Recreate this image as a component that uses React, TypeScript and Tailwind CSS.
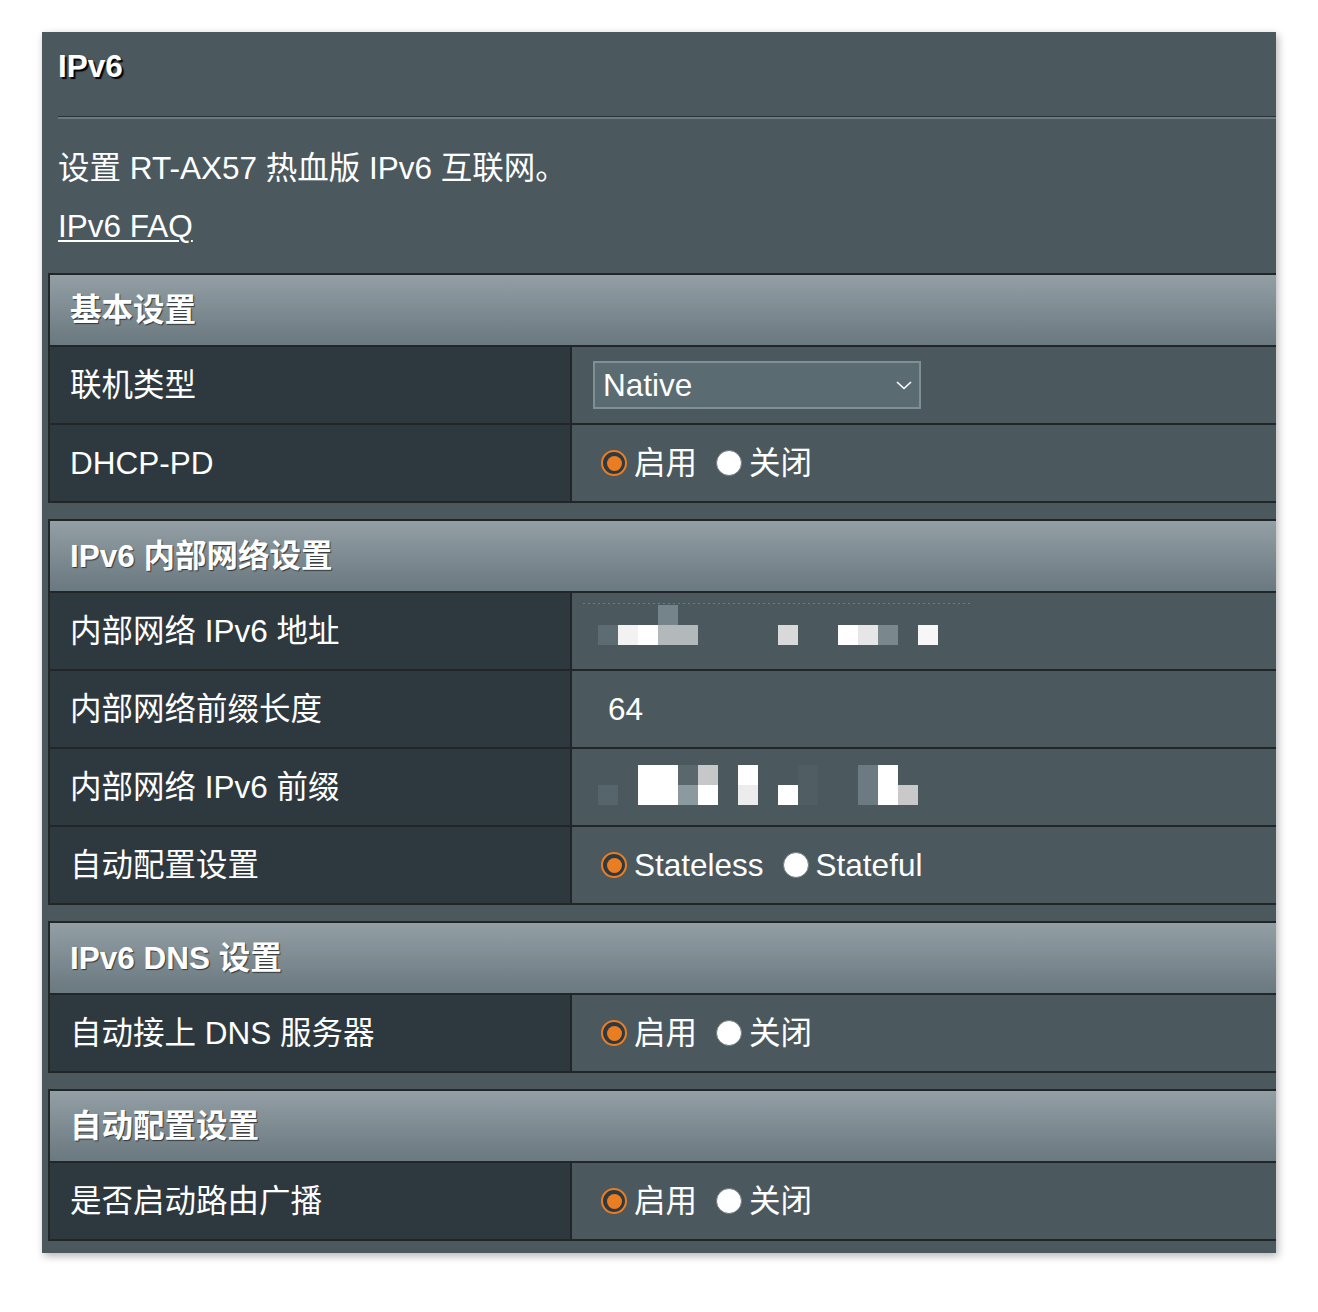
import React from "react";

function Radio({ checked }: { checked: boolean }) {
  return checked ? (
    <span className="w-[26px] h-[26px] rounded-full border-[2.5px] border-[#ea7d22] bg-[#2e3940] flex items-center justify-center shrink-0">
      <span className="w-[15px] h-[15px] rounded-full bg-[#ea7d22]" />
    </span>
  ) : (
    <span className="w-[26px] h-[26px] rounded-full border-[1.5px] border-[#6f7d83] bg-white shrink-0" />
  );
}

function RadioGroup({ options }: { options: string[] }) {
  return (
    <div className="flex items-center">
      {options.map((o, i) => (
        <div key={o} className={"flex items-center " + (i > 0 ? "ml-[19px]" : "")}>
          <Radio checked={i === 0} />
          <span className="ml-[7px]">{o}</span>
        </div>
      ))}
    </div>
  );
}

function Header({ children }: { children: React.ReactNode }) {
  return (
    <div className="h-[70px] bg-gradient-to-b from-[#939fa5] to-[#6a787f] flex items-center pl-[20px] font-bold [text-shadow:1px_1px_1px_rgba(0,0,0,0.6)]">
      {children}
    </div>
  );
}

function Row({ label, children }: { label: string; children?: React.ReactNode }) {
  return (
    <div className="h-[78px] border-t-2 border-[#232628] flex">
      <div className="w-[522px] bg-[#2e393f] border-r-2 border-[#232628] flex items-center pl-[20px]">
        {label}
      </div>
      <div className="flex-1 flex items-center pl-[29px] relative">{children}</div>
    </div>
  );
}

function Table({ children, first }: { children: React.ReactNode; first?: boolean }) {
  return (
    <div className={"ml-[6px] border-t-2 border-l-2 border-b-2 border-[#232628] " + (first ? "mt-[29px]" : "mt-[16px]")}>
      {children}
    </div>
  );
}

function MaskAddr() {
  return (
    <svg width="420" height="76" className="absolute left-0 top-0" viewBox="0 0 420 76">
      <line x1="11" y1="10.5" x2="398" y2="10.5" stroke="#7d8b91" strokeWidth="1" strokeDasharray="2 3" opacity="0.7" />
      <rect x="86" y="12" width="20" height="20" fill="#75848a" />
      <rect x="26" y="32" width="20" height="20" fill="#5d6c72" />
      <rect x="46" y="32" width="20" height="20" fill="#f2f2f2" />
      <rect x="66" y="32" width="20" height="20" fill="#ffffff" />
      <rect x="86" y="32" width="40" height="20" fill="#b3b8bb" />
      <rect x="206" y="32" width="20" height="20" fill="#d9d9d9" />
      <rect x="266" y="32" width="20" height="20" fill="#ffffff" />
      <rect x="286" y="32" width="20" height="20" fill="#e6e6e6" />
      <rect x="306" y="32" width="20" height="20" fill="#7a888e" />
      <rect x="346" y="32" width="20" height="20" fill="#f7f7f7" />
    </svg>
  );
}

function MaskPrefix() {
  return (
    <svg width="420" height="76" className="absolute left-0 top-0" viewBox="0 0 420 76">
      <rect x="26" y="36" width="20" height="20" fill="#56656b" />
      <rect x="66" y="16" width="40" height="40" fill="#ffffff" />
      <rect x="106" y="16" width="20" height="20" fill="#5a686e" />
      <rect x="106" y="36" width="20" height="20" fill="#8c999e" />
      <rect x="126" y="16" width="20" height="20" fill="#c6c7c8" />
      <rect x="126" y="36" width="20" height="20" fill="#ffffff" />
      <rect x="166" y="16" width="20" height="20" fill="#ffffff" />
      <rect x="166" y="36" width="20" height="20" fill="#ececec" />
      <rect x="206" y="36" width="20" height="20" fill="#ffffff" />
      <rect x="226" y="16" width="20" height="40" fill="#505e64" />
      <rect x="286" y="16" width="20" height="40" fill="#6c7b81" />
      <rect x="306" y="16" width="20" height="40" fill="#ffffff" />
      <rect x="326" y="36" width="20" height="20" fill="#c9c9c9" />
    </svg>
  );
}

export default function App() {
  return (
    <div className="min-h-[1312px] bg-white pt-[32px] pl-[42px] font-['Liberation_Sans','Noto_Sans_CJK_SC',sans-serif] text-[31.5px] leading-[36px] text-white">
      <div className="w-[1234px] bg-[#4b595f] pb-[12px] shadow-[2px_3px_8px_rgba(0,0,0,0.3)] overflow-hidden">
        <div className="pl-[16px]">
          <div className="pt-[16px] font-bold [text-shadow:2px_2px_1px_#000]">IPv6</div>
          <div className="mt-[32px] h-[3px] border-t border-[#2a3438] bg-[#6c7a80]" />
          <div className="mt-[31px]">设置 RT-AX57 热血版 IPv6 互联网。</div>
          <div className="mt-[22px]">
            <a className="underline underline-offset-[3px] decoration-[2px]">IPv6 FAQ</a>
          </div>
        </div>

        <Table first>
          <Header>基本设置</Header>
          <Row label="联机类型">
            <div className="-ml-[8px] w-[328px] h-[48px] border-2 border-[#7f8f96] bg-[#5a6b72] flex items-center justify-between pl-[8px] pr-[6px]">
              <span>Native</span>
              <svg width="18" height="12" viewBox="0 0 18 12">
                <path d="M2 3 L9 9.5 L16 3" stroke="#fff" strokeWidth="1.6" fill="none" />
              </svg>
            </div>
          </Row>
          <Row label="DHCP-PD">
            <RadioGroup options={["启用", "关闭"]} />
          </Row>
        </Table>

        <Table>
          <Header>IPv6 内部网络设置</Header>
          <Row label="内部网络 IPv6 地址">
            <MaskAddr />
          </Row>
          <Row label="内部网络前缀长度">
            <span className="ml-[7px]">64</span>
          </Row>
          <Row label="内部网络 IPv6 前缀">
            <MaskPrefix />
          </Row>
          <Row label="自动配置设置">
            <RadioGroup options={["Stateless", "Stateful"]} />
          </Row>
        </Table>

        <Table>
          <Header>IPv6 DNS 设置</Header>
          <Row label="自动接上 DNS 服务器">
            <RadioGroup options={["启用", "关闭"]} />
          </Row>
        </Table>

        <Table>
          <Header>自动配置设置</Header>
          <Row label="是否启动路由广播">
            <RadioGroup options={["启用", "关闭"]} />
          </Row>
        </Table>
      </div>
    </div>
  );
}
